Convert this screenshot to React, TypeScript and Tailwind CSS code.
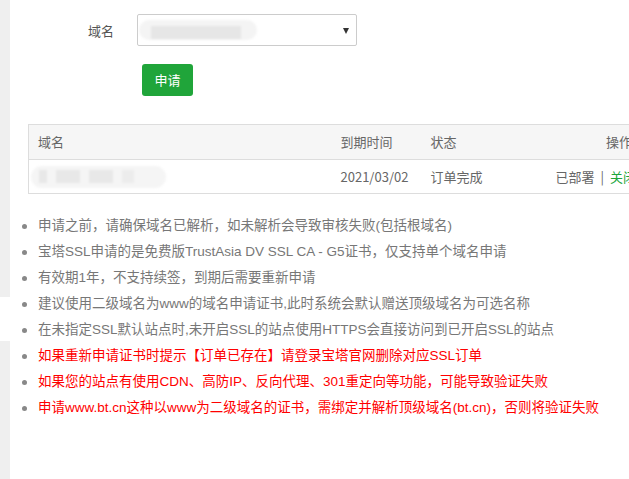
const tips = [
  { text: "申请之前，请确保域名已解析，如未解析会导致审核失败(包括根域名)", red: false },
  { text: "宝塔SSL申请的是免费版TrustAsia DV SSL CA - G5证书，仅支持单个域名申请", red: false },
  { text: "有效期1年，不支持续签，到期后需要重新申请", red: false },
  { text: "建议使用二级域名为www的域名申请证书,此时系统会默认赠送顶级域名为可选名称", red: false },
  { text: "在未指定SSL默认站点时,未开启SSL的站点使用HTTPS会直接访问到已开启SSL的站点", red: false },
  { text: "如果重新申请证书时提示【订单已存在】请登录宝塔官网删除对应SSL订单", red: true },
  { text: "如果您的站点有使用CDN、高防IP、反向代理、301重定向等功能，可能导致验证失败", red: true },
  { text: "申请www.bt.cn这种以www为二级域名的证书，需绑定并解析顶级域名(bt.cn)，否则将验证失败", red: true },
];

export default function App() {
  return (
    <div
      className="flex w-[629px] h-[479px] overflow-hidden bg-white text-[13px] text-[#666]"
      style={{ fontFamily: '"Microsoft YaHei", "Noto Sans CJK SC", "Noto Sans", sans-serif' }}
    >
      {/* 左侧灰条 */}
      <div className="flex flex-col w-[10px] shrink-0">
        <div className="h-[297px] bg-[#efefef]" />
        <div className="h-[44px] bg-white" />
        <div className="flex-1 bg-[#efefef]" />
      </div>

      <div className="flex-1 min-w-0">
        {/* 表单 */}
        <div className="flex items-center pt-[14px]">
          <label className="w-[104px] text-right text-[#555] leading-none">域名</label>
          <div className="relative ml-[23px] w-[220px] h-[32px] border border-[#ccc] rounded-[2px] flex items-center">
            <div className="ml-[1px] w-[118px] h-[20px] rounded-full bg-[#f4f4f4] blur-[1px] flex items-end px-[12px] pb-[1px]">
              <div className="w-[90px] h-[13px] bg-[#e6e6e6]" />
            </div>
            <div className="absolute right-[7px] top-[13px] w-0 h-0 border-l-[3.5px] border-r-[3.5px] border-t-[6px] border-l-transparent border-r-transparent border-t-[#333]" />
          </div>
        </div>
        <div className="pl-[132px] pt-[18px]">
          <button className="w-[51px] h-[32px] rounded-[3px] bg-[#20a53a] text-white text-[13px]">申请</button>
        </div>

        {/* 表格 */}
        <div className="ml-[18px] mt-[28px] w-[614px]">
          <table className="table-fixed w-[614px] border-collapse border border-[#ddd]">
            <colgroup>
              <col className="w-[303px]" />
              <col className="w-[90px]" />
              <col className="w-[100px]" />
              <col className="w-[121px]" />
            </colgroup>
            <thead>
              <tr className="h-[35px] bg-[#f6f6f6] border-b border-[#ddd]">
                <th className="px-[9px] text-left font-normal">域名</th>
                <th className="px-[9px] text-left font-normal">到期时间</th>
                <th className="px-[9px] text-left font-normal">状态</th>
                <th className="px-[10px] text-right font-normal">操作</th>
              </tr>
            </thead>
            <tbody>
              <tr className="h-[34px]">
                <td className="px-[2px]">
                  <div className="w-[135px] h-[22px] rounded-full bg-[#f5f5f5] blur-[1px] flex items-center gap-[9px] pl-[8px]">
                    <div className="w-[8px] h-[13px] bg-[#e8e8e8]" />
                    <div className="w-[24px] h-[13px] bg-[#e8e8e8]" />
                    <div className="w-[24px] h-[13px] bg-[#e8e8e8]" />
                    <div className="w-[12px] h-[13px] bg-[#ececec]" />
                  </div>
                </td>
                <td className="px-[9px]">2021/03/02</td>
                <td className="px-[9px]">订单完成</td>
                <td className="pl-[6px] pr-[4px] text-left whitespace-nowrap">
                  <span className="ml-[28px]">已部署</span>
                  <span className="ml-[6px] mr-[6px]">|</span>
                  <span className="text-[#20a53a]">关闭</span>
                </td>
              </tr>
            </tbody>
          </table>
        </div>

        {/* 提示 */}
        <ul
          className="mt-[19px] pl-[12px] text-[13.5px]"
          style={{ fontFamily: '"Liberation Sans", "Noto Sans CJK SC", sans-serif' }}
        >
          {tips.map((t, i) => (
            <li key={i} className="flex items-center h-[26px] whitespace-nowrap">
              <span className="w-[5px] h-[5px] rounded-full bg-[#888] shrink-0" />
              <span className={"ml-[11px] " + (t.red ? "text-[#f00]" : "text-[#777]")}>{t.text}</span>
            </li>
          ))}
        </ul>
      </div>
    </div>
  );
}
